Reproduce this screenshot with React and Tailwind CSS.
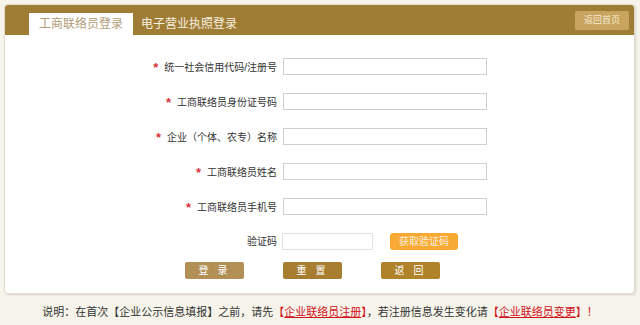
import React from "react";

const font = { fontFamily: '"Liberation Sans", "Noto Sans CJK SC", sans-serif' };

function Row({ label, star = true, children }) {
  return (
    <div className="flex items-center h-[17px]">
      <div className="w-[272px] text-right text-[10px] text-[#333] leading-none whitespace-nowrap">
        {star && <span className="text-[#d9363e] text-[13px] font-bold mr-[6px] relative top-[1px]">*</span>}
        {label}
      </div>
      {children}
    </div>
  );
}

export default function App() {
  return (
    <div className="w-[640px] h-[325px] bg-[#f5f3ea] pt-[4px] px-[4px] overflow-hidden" style={font}>
      <div className="w-[631px] h-[290px] bg-white rounded-[4px] border border-[#e3ddd0] shadow-[1px_1px_2px_rgba(0,0,0,0.12)] overflow-hidden flex flex-col">
        <div className="h-[30px] bg-[#a07d35] flex items-end pl-[24px] pr-[6px] relative shrink-0">
          <div className="h-[22px] w-[104px] bg-white flex items-center justify-center text-[12px] text-[#b29d79]">工商联络员登录</div>
          <div className="h-[22px] ml-[8px] flex items-center text-[12px] text-[#f7efe0]">电子营业执照登录</div>
          <div className="absolute right-[5px] top-[6px] w-[54px] h-[19px] bg-[#c9a45e] rounded-[2px] flex items-center justify-center text-[9px] text-[#f6ecd8]">返回首页</div>
        </div>
        <div className="flex flex-col pt-[23px] gap-[18px]">
          <Row label="统一社会信用代码/注册号">
            <div className="ml-[6px] w-[204px] h-[17px] border border-[#cfcfcf] bg-white" />
          </Row>
          <Row label="工商联络员身份证号码">
            <div className="ml-[6px] w-[204px] h-[17px] border border-[#cfcfcf] bg-white" />
          </Row>
          <Row label="企业（个体、农专）名称">
            <div className="ml-[6px] w-[204px] h-[17px] border border-[#cfcfcf] bg-white" />
          </Row>
          <Row label="工商联络员姓名">
            <div className="ml-[6px] w-[204px] h-[17px] border border-[#cfcfcf] bg-white" />
          </Row>
          <Row label="工商联络员手机号">
            <div className="ml-[6px] w-[204px] h-[17px] border border-[#cfcfcf] bg-white" />
          </Row>
          <Row label="验证码" star={false}>
            <div className="ml-[5px] w-[91px] h-[17px] border border-[#e2e2e2] bg-white" />
            <div className="ml-[17px] w-[68px] h-[17px] -mt-[1px] bg-[#f7a934] rounded-[3px] flex items-center justify-center text-[10px] text-[#fdf0dc]">获取验证码</div>
          </Row>
        </div>
        <div className="flex pl-[180px] gap-[39px] mt-[12px]">
          <div className="w-[59px] h-[17px] bg-[#b28f55] rounded-[2px] flex items-center justify-center text-[10px] text-white tracking-[3px]">登 录</div>
          <div className="w-[59px] h-[17px] bg-[#a77e2f] rounded-[2px] flex items-center justify-center text-[10px] text-white tracking-[3px]">重 置</div>
          <div className="w-[59px] h-[17px] bg-[#b0822a] rounded-[2px] flex items-center justify-center text-[10px] text-white tracking-[3px]">返 回</div>
        </div>
      </div>
      <div className="mt-[13px] text-center text-[11px] text-[#333] leading-none whitespace-nowrap">
        说明：在首次【企业公示信息填报】之前，请先<span className="text-[#d0121b]">【<span className="underline">企业联络员注册</span>】</span>，若注册信息发生变化请<span className="text-[#d0121b]">【<span className="underline">企业联络员变更</span>】！</span>
      </div>
    </div>
  );
}
